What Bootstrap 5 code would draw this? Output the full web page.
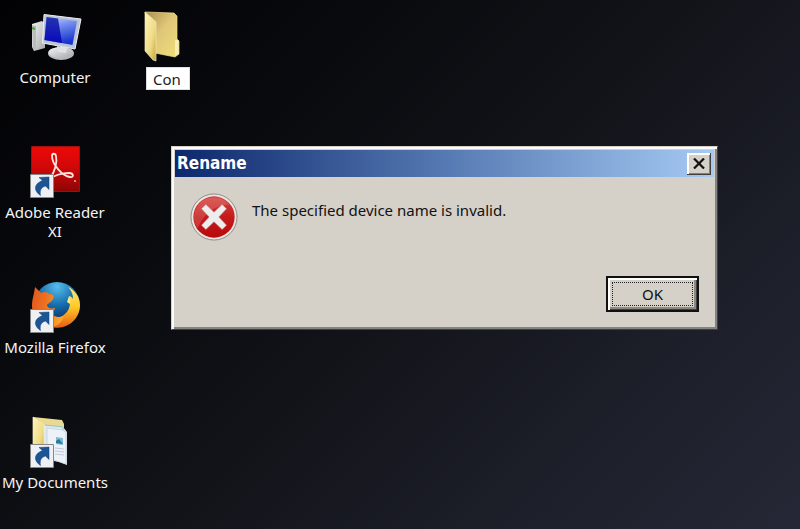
<!DOCTYPE html>
<html lang="en">
<head>
<meta charset="utf-8">
<meta name="viewport" content="width=device-width, initial-scale=1">
<title>Desktop</title>
<link href="https://cdn.jsdelivr.net/npm/bootstrap@5.3.0/dist/css/bootstrap.min.css" rel="stylesheet">
<style>
  body {
    font: 15px/19px "Noto Sans", "Open Sans", sans-serif;
    background: linear-gradient(135deg, #020204 0%, #08090d 25%, #111217 48%, #1b1d27 72%, #262837 100%) #111217;
  }
  .desktop { padding-top: 11px; }
  .icon-grid {
    display: grid;
    grid-template-columns: repeat(auto-fill, 112px);
    grid-auto-rows: 135px;
  }
  .shortcut { color: #f4f4f4; gap: 5px; padding-right: 2px; }
  .shortcut:hover { color: #fff; }
  .shortcut svg { width: 52px; height: 52px; margin-left: 2px; }
  .first { grid-column: 1; }
  .renaming { gap: 4px; padding-right: 0; }
  .rename-box { width: 44px; height: 23px; padding: 0 6px; font: inherit; color: #222; background: #fff; border: 1px solid #ddd; outline: 0; border-radius: 0; }
  .dialog-window {
    left: 171px; top: 146px; width: 547px; padding: 3px;
    line-height: 20px;
    color: #111; background: #d5d0c8;
    border: 1px solid; border-color: #d5d0c8 #404040 #404040 #d5d0c8;
    box-shadow: inset 2px 2px #fafafa, inset -2px -2px #85837f;
  }
  .title-strip { height: 27px; padding: 0 3px 0 2px; background: linear-gradient(90deg, #0d286d, #5579b2 50%, #a6caf3); }
  .title-strip h1 { font: bold 17px/27px "DejaVu Sans Condensed", "Noto Sans", sans-serif; }
  .close-btn, .ok-btn { color: #111; background: #d5d0c8; border: 0; border-radius: 0; }
  .close-btn { width: 24px; height: 22px; box-shadow: inset -1px -1px #404040, inset 2px 2px #fff, inset -2px -2px #808080; }
  .message-row { padding: 15px 15px 0; gap: 14px; }
  .message-row p { padding-top: 8px; }
  .button-row { padding: 34px 15px 14px; }
  .ok-btn { width: 93px; height: 36px; padding: 4px; line-height: 18px; border: 2px solid #111; box-shadow: inset 2px 2px #fff, inset -1px -1px #404040, inset -3px -3px #8c8983; }
  .ok-btn span { display: block; height: 100%; padding-top: 2px; border: 1px dotted #222; }
</style>
<script src="https://cdn.jsdelivr.net/npm/bootstrap@5.3.0/dist/js/bootstrap.bundle.min.js"></script>
</head>
<body class="min-vh-100">
<svg width="0" height="0" class="position-absolute" aria-hidden="true">
  <defs>
    <linearGradient id="screen" x1="0" y1="0" x2=".3" y2="1"><stop stop-color="#c9dcff"/><stop offset=".4" stop-color="#7590ee"/><stop offset="1" stop-color="#1a36d0"/></linearGradient>
    <linearGradient id="screenDark" x1="0" y1="0" x2="0" y2="1"><stop stop-color="#2534ae"/><stop offset="1" stop-color="#0808bd"/></linearGradient>
    <linearGradient id="metal" x1="0" y1="0" x2="1" y2="1"><stop stop-color="#f5f5f5"/><stop offset="1" stop-color="#a4a6a9"/></linearGradient>
    <linearGradient id="flap" x1="0" y1="0" x2="1" y2="1"><stop stop-color="#fff5b8"/><stop offset=".6" stop-color="#eedb86"/><stop offset="1" stop-color="#c4a23c"/></linearGradient>
    <linearGradient id="back" x1="0" y1="0" x2="1" y2="1"><stop stop-color="#a98e4c"/><stop offset=".45" stop-color="#dfc679"/><stop offset="1" stop-color="#f2df79"/></linearGradient>
    <linearGradient id="adobe" x1="0" y1="0" x2="0" y2="1"><stop stop-color="#ed0909"/><stop offset=".45" stop-color="#d20808"/><stop offset="1" stop-color="#8d0505"/></linearGradient>
    <radialGradient id="globe" cx=".5" cy=".1" r=".8"><stop stop-color="#58bdea"/><stop offset=".5" stop-color="#176fae"/><stop offset="1" stop-color="#09265f"/></radialGradient>
    <linearGradient id="fox" x1="0" y1="0" x2="1" y2=".2"><stop stop-color="#e4561c"/><stop offset=".5" stop-color="#ee7322"/><stop offset="1" stop-color="#f9a52b"/></linearGradient>
    <linearGradient id="tail" x1="0" y1="0" x2="0" y2="1"><stop stop-color="#ffe77a"/><stop offset=".5" stop-color="#ffc826"/><stop offset="1" stop-color="#e65c16"/></linearGradient>
    <linearGradient id="stop" x1="0" y1="0" x2="0" y2="1"><stop stop-color="#d4423d"/><stop offset=".5" stop-color="#c51b1c"/><stop offset="1" stop-color="#b9090b"/></linearGradient>
    <g id="link-mark">
      <path d="M.5 28.500h23v23H.5z" fill="#eef0f4" stroke="#868686"/>
      <path d="M9 31.500L19 31v12.500L15.500 40c-4 1-6 4-5 9.500-6-4-8-11 2-15z" fill="#1c5494" stroke="#123e75" stroke-width=".5"/>
    </g>
  </defs>
</svg>
<main class="desktop min-vh-100 position-relative overflow-hidden">
  <div class="icon-grid">
    <a href="#" class="shortcut first d-flex flex-column align-items-center text-center text-decoration-none">
      <svg viewBox="0 0 52 52" aria-hidden="true">
        <path d="M2 13l10-3 3 3v24L4 40l-2-4z" fill="url(#metal)"/>
        <path d="M2 14l4 1v24l-3-2z" fill="#b9bcbc"/><path d="M2 17l3 1" stroke="#48a73b" stroke-width="2"/>
        <ellipse cx="31" cy="42.500" rx="13" ry="6.500" fill="#b6b8bb"/><ellipse cx="31" cy="41.500" rx="12.500" ry="5.500" fill="url(#metal)"/>
        <path d="M27 35l10 2-1 5-8-1z" fill="#dfe1e4"/>
        <path d="M14 3.500L51 8l-6 30-32.500-6z" fill="#bcc4d6" stroke="#eceff6"/>
        <path d="M16.500 6L47 10l-4.500 24-28-5z" fill="url(#screen)"/>
        <path d="M16.500 6L28 7.500l4 24.500-17.500-3z" fill="url(#screenDark)"/>
      </svg>
      <span>Computer</span>
    </a>
    <div class="shortcut renaming d-flex flex-column align-items-center text-center">
      <svg viewBox="0 0 52 52" aria-hidden="true">
        <path d="M2 1L31 2l3 3v23l2 2v13l-4 3-20-4z" fill="url(#back)" stroke="#f1dd91" stroke-width=".7"/>
        <path d="M32 29h3.500v14L32 45z" fill="#f6edb9"/>
        <path d="M2 1l11 10v39L10 49 2 40z" fill="url(#flap)" stroke="#f7eab0" stroke-width=".7"/>
      </svg>
      <input class="rename-box" type="text" value="Con" aria-label="Folder name">
    </div>
    <a href="#" class="shortcut first d-flex flex-column align-items-center text-center text-decoration-none">
      <svg viewBox="0 0 52 52" aria-hidden="true">
        <path d="M1.500.500h48v45h-48z" fill="url(#adobe)" stroke="#a20d0d"/>
        <path d="M20 33c3-5 8-14 6-23-.5-3-4-3-4 0 0 8 10 20 18 21 4 1 4-4-1-4-6 0-15 2-19 6" fill="none" stroke="#ffe4df" stroke-width="1.800" stroke-linejoin="round"/>
        <circle cx="45" cy="35" r="1" fill="#eaa"/>
        <use href="#link-mark"/>
      </svg>
      <span>Adobe Reader XI</span>
    </a>
    <a href="#" class="shortcut first d-flex flex-column align-items-center text-center text-decoration-none">
      <svg viewBox="0 0 52 52" aria-hidden="true">
        <circle cx="27" cy="24" r="23" fill="url(#globe)"/>
        <path d="M38 6c4 4 5 8 5 12-1-2-3-3-4-3 3 10-1 18-9 21l-14 8c16 8 34-3 34-20C50 16 45 9 38 6z" fill="url(#tail)"/>
        <path d="M5 6l6 6c4-2 7-1 8 1 4 0 6 2 4 5-1 3-5 4-6 6 0 3 4 4 8 3-1 4-3 5-5 5 4 4 9 5 14 3-2 6-6 11-15 11C8 44 2 36 2 25 2 18 4 14 5 6z" fill="url(#fox)"/>
        <path d="M39 15c1 2 2 5 1 8l-3-2z" fill="#ffe98a"/>
        <use href="#link-mark"/>
      </svg>
      <span>Mozilla Firefox</span>
    </a>
    <a href="#" class="shortcut first d-flex flex-column align-items-center text-center text-decoration-none">
      <svg viewBox="0 0 52 52" aria-hidden="true">
        <path d="M3 1l29 3 2 4v33l-20 4z" fill="#ead991"/>
        <path d="M14 9l19 2 4 5v33l-8-3-15-3z" fill="#dfe7ef"/>
        <path d="M17 12l16 2 3 3v31l-12-4-7-5z" fill="#edf1f8" stroke="#bac8d5" stroke-width=".6"/>
        <path d="M15 9l18 2v3" fill="none" stroke="#8bc8d0"/>
        <path d="M26 21l7 1v7l-7-1z" fill="#83bad3"/><path d="M26 25l3-2 4 5-7-1z" fill="#277b9b"/>
        <path d="M25 32l9 1M25 35l9 1M25 38l9 1" stroke="#c2c9df" stroke-width="1"/>
        <path d="M3 1l11 8v34L3 39z" fill="url(#flap)" stroke="#f9efbd" stroke-width=".7"/>
        <use href="#link-mark"/>
      </svg>
      <span class="text-nowrap">My Documents</span>
    </a>
  </div>

  <section class="dialog-window position-absolute" role="dialog" aria-labelledby="dialog-title">
    <header class="title-strip d-flex align-items-center justify-content-between">
      <h1 id="dialog-title" class="m-0 text-white">Rename</h1>
      <button type="button" class="close-btn d-flex align-items-center justify-content-center p-0" aria-label="Close">
        <svg width="12" height="11" viewBox="0 0 12 11" aria-hidden="true"><path d="M1 .5l10 10M11 .5l-10 10" stroke="#111" stroke-width="2.200"/></svg>
      </button>
    </header>
    <div class="message-row d-flex align-items-start">
      <svg width="48" height="50" viewBox="0 0 50 50" class="flex-shrink-0" aria-hidden="true">
        <circle cx="25" cy="25" r="24" fill="#e9e5e2" stroke="#8c8a87"/>
        <circle cx="25" cy="25" r="21.500" fill="url(#stop)"/>
        <path d="M4 25a21 21 0 0 1 37-13C27 13 16 19 8 37a21 21 0 0 1-4-12z" fill="#fff" opacity=".15"/>
        <path d="M16.500 12l8.500 8 8.500-8 4.500 4.500-8 8.500 8 8.500-4.500 4.500-8.500-8-8.500 8-4.500-4.500 8-8.500-8-8.500z" fill="#ededed" stroke="#b99" stroke-width=".5"/>
      </svg>
      <p class="m-0">The specified device name is invalid.</p>
    </div>
    <div class="button-row d-flex justify-content-end">
      <button type="button" class="ok-btn"><span>OK</span></button>
    </div>
  </section>
</main>
</body>
</html>
